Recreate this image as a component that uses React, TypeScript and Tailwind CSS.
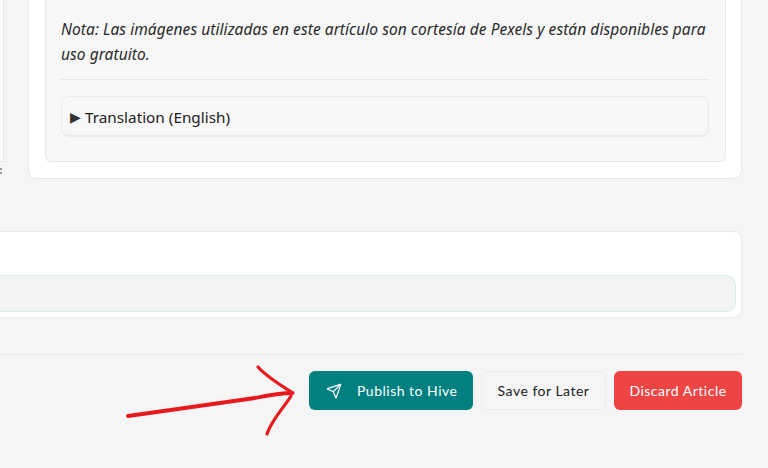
import { Send } from "lucide-react";

export default function App() {
  return (
    <div className="h-[468px] w-[768px] overflow-hidden relative bg-[#f5f5f5] font-['Noto_Sans','Open_Sans',sans-serif]">
      <div className="pr-[26px]">
        {/* top row */}
        <div className="flex h-[179px] items-end">
          <div className="w-[28px] self-start shrink-0 h-[176px] flex flex-col">
            <div className="w-[4px] h-[162px] border-r border-b border-[#e2e5ea] bg-white"></div>
            <div className="flex flex-col gap-[2px] mt-[6px]">
              <div className="w-[2px] h-[2px] bg-[#9a9a9a]"></div>
              <div className="w-[2px] h-[2px] bg-[#9a9a9a]"></div>
            </div>
          </div>
          <div className="flex-1 h-[179px] bg-white border border-t-0 border-[#e3e7ee] rounded-b-[8px] pl-[16px] pr-[15px] pb-[16px]">
            <div className="h-[162px] bg-[#f7f7f8] border border-t-0 border-[#e5e7eb] rounded-b-[6px] pl-[15px] pt-[17px]">
              <p className="w-[648px] italic text-[15.5px] tracking-[0.06px] leading-[25px] text-[#2a2a2a] font-['Noto_Sans',sans-serif]">
                Nota: Las imágenes utilizadas en este artículo son cortesía de Pexels y están disponibles para uso gratuito.
              </p>
              <div className="mt-[12px] h-px w-[648px] bg-[#e5e7eb]"></div>
              <div className="mt-[16px] w-[648px] h-[41px] border-2 border-t border-x border-[#e8eaef] rounded-[8px] flex items-center pt-[2px] pl-[8px] gap-[4px] text-[15.3px] text-[#222]">
                <span className="text-[14px] leading-none text-[#333]">▶</span>
                <span>Translation (English)</span>
              </div>
            </div>
          </div>
        </div>
        {/* second card */}
        <div className="mt-[52px] -ml-[20px] h-[87px] bg-white border border-[#e8ebf0] rounded-r-[8px] pt-[43px] pr-[5px]">
          <div className="h-[37px] bg-[#f4f4f5] border border-l-0 border-[#d8ebe8] rounded-r-[10px]"></div>
        </div>
        {/* footer */}
        <div className="mt-[36px] h-px bg-[#e3e7ee]"></div>
        <div className="mt-[16px] flex justify-end gap-[8px] font-['Lato',sans-serif] text-[14px] font-normal tracking-[0.5px]">
          <button className="w-[164px] h-[39px] rounded-[6px] bg-[#008080] text-white flex items-center pl-[17px]">
            <Send size={16} strokeWidth={1.8} className="mr-[15px]" />
            <span>Publish to Hive</span>
          </button>
          <button className="w-[125px] h-[39px] rounded-[6px] border border-[#ececee] text-[#222] bg-[#f5f5f6]">Save for Later</button>
          <button className="w-[128px] h-[39px] rounded-[6px] bg-[#ef4444] text-white">Discard Article</button>
        </div>
      </div>
      {/* hand-drawn annotation */}
      <svg className="absolute left-0 top-0 pointer-events-none" width="768" height="468" fill="none" stroke="#e8191c" strokeLinecap="round" strokeLinejoin="round">
        <path d="M128 416 C170 410 215 404 255 398 C270 395 280 393 292 393" strokeWidth="3.8" />
        <path d="M258 367 C266 376 280 385 293 393" strokeWidth="3.2" />
        <path d="M291 396 C283 409 272 419 267 434" strokeWidth="3.2" />
      </svg>
    </div>
  );
}
